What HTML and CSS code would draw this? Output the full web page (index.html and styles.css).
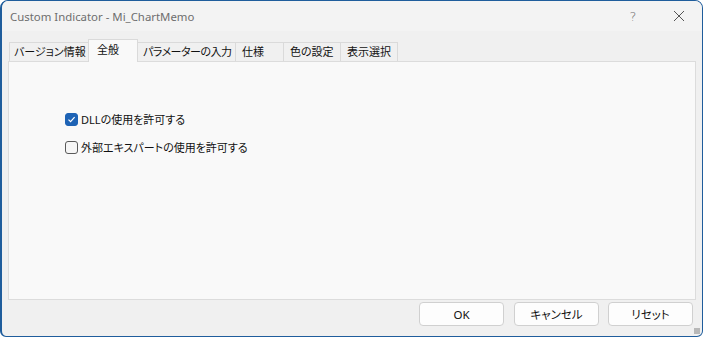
FILE: index.html
```html
<!DOCTYPE html>
<html lang="ja">
<head>
    <meta charset="UTF-8" />
    <title>Custom Indicator - Mi_ChartMemo</title>
    <link rel="stylesheet" href="styles.css">
</head>
<body>
    <div class="window">
        <div class="titlebar">
            <span class="title">Custom Indicator - Mi_ChartMemo</span>
            <span class="help">?</span>
            <span class="close">
                <svg width="12" height="12" viewBox="0 0 12 12"><path d="M1 1 L11 11 M11 1 L1 11" stroke="#555" stroke-width="1" fill="none"/></svg>
            </span>
        </div>

        <div class="content">
            <div class="tabs">
                <div class="tab">バージョン情報</div>
                <div class="tab active">全般</div>
                <div class="tab">パラメーターの入力</div>
                <div class="tab">仕様</div>
                <div class="tab">色の設定</div>
                <div class="tab">表示選択</div>
            </div>

            <div class="panel">
                <label class="check">
                    <span class="box checked">
                        <svg width="9" height="9" viewBox="0 0 9 9"><path d="M1.5 4.6 L3.6 6.6 L7.6 2.2" stroke="#fff" stroke-width="1.2" fill="none"/></svg>
                    </span>
                    DLLの使用を許可する
                </label>
                <label class="check">
                    <span class="box"></span>
                    外部エキスパートの使用を許可する
                </label>
            </div>

            <div class="buttons">
                <button>OK</button>
                <button>キャンセル</button>
                <button class="last">リセット</button>
            </div>
        </div>
        <div class="grip"></div>
    </div>
</body>
</html>
```

FILE: styles.css
```css
html, body {
    margin: 0;
    padding: 0;
    background: #ffffff;
}
body {
    font-family: 'Noto Sans', 'Noto Sans CJK JP', sans-serif;
    font-size: 12px;
    color: #1a1a1a;
}

.window {
    position: relative;
    width: 703px;
    height: 337px;
    box-sizing: border-box;
    border: 1px solid #1f5d9c;
    border-left-width: 2px;
    border-radius: 8px 8px 6px 6px;
    background: #f0f0f0;
    display: flex;
    flex-direction: column;
    overflow: hidden;
}

.titlebar {
    height: 30px;
    background: #f3f3f3;
    display: flex;
    align-items: center;
    padding-left: 8px;
}
.title {
    flex: 1;
    color: #6e6e6e;
    font-size: 11.4px;
}
.help {
    width: 46px;
    text-align: center;
    color: #707070;
    font-size: 13px;
    font-family: 'DejaVu Sans', sans-serif;
    font-weight: 300;
}
.close {
    width: 46px;
    height: 30px;
    display: flex;
    align-items: center;
    justify-content: center;
}

.content {
    flex: 1;
    display: flex;
    flex-direction: column;
    padding: 7px 6px 0 6px;
}

.tab, .check, button {
    font-family: 'Noto Sans', 'Noto Sans CJK JP', sans-serif;
    font-feature-settings: "palt";
}

.tabs {
    display: flex;
    align-items: flex-end;
    height: 23px;
    padding-left: 1px;
}
.tab {
    height: 19px;
    line-height: 18px;
    padding: 0 0 0 4px;
    border: 1px solid #dadada;
    border-bottom: none;
    border-right: none;
    background: #f0f0f0;
    color: #111;
    font-size: 11px;
    white-space: nowrap;
    box-sizing: border-box;
}
.tab:nth-child(1) { width: 79px; }
.tab:nth-child(2) { width: 50px; }
.tab:nth-child(3) { width: 97px; letter-spacing: -0.5px; }
.tab:nth-child(4) { width: 48px; padding-left: 6px; }
.tab:nth-child(5) { width: 57px; padding-left: 6px; }
.tab:nth-child(6) { width: 58px; padding-left: 6px; border-right: 1px solid #dadada; }
.tab.active {
    height: 23px;
    line-height: 20px;
    background: #f9f9f9;
    border-right: 1px solid #dadada;
    margin-bottom: -1px;
    position: relative;
    z-index: 1;
    padding-left: 8px;
    padding-bottom: 4px;
}
.tab.active + .tab { border-left: none; padding-left: 5px; }

.panel {
    height: 239px;
    box-sizing: border-box;
    border: 1px solid #dcdcdc;
    background: #f9f9f9;
    padding: 49px 0 0 56px;
    display: flex;
    flex-direction: column;
    gap: 12px;
}

.check {
    display: flex;
    align-items: center;
    gap: 3px;
    height: 16px;
    font-size: 11px;
    color: #111;
}
.box {
    width: 13px;
    height: 13px;
    box-sizing: border-box;
    border: 1px solid #5a5a5a;
    border-radius: 3px;
    background: #f6f6f6;
    display: flex;
    align-items: center;
    justify-content: center;
}
.box.checked {
    background: #1e63b5;
    border-color: #1e63b5;
}

.buttons {
    display: flex;
    justify-content: flex-end;
    padding-top: 2px;
    gap: 10px;
}
button {
    width: 85px;
    height: 24px;
    border: 1px solid #d0d0d0;
    border-radius: 4px;
    background: #fdfdfd;
    font-size: 11.5px;
    color: #111;
    padding: 0;
}
button.last { margin-left: -1px; margin-right: 3px; }

.grip {
    position: absolute;
    right: 2px;
    bottom: 2px;
    width: 6px;
    height: 6px;
    background-image: radial-gradient(circle, #b8b8b8 0.8px, transparent 1px);
    background-size: 2px 2px;
}
```
